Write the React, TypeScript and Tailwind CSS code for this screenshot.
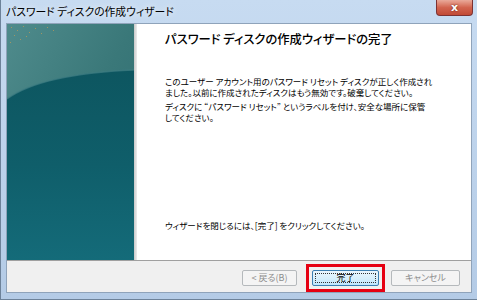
import React from "react";

const jp = "font-['Noto_Sans_CJK_JP','Noto_Sans',sans-serif] [font-feature-settings:'palt']";

const SidePanel = () => (
  <svg width="127" height="236" viewBox="0 0 127 236" className="block">
    <defs>
      <linearGradient id="upper" x1="0" y1="0" x2="1" y2="1">
        <stop offset="0" stopColor="#4f8b8c" />
        <stop offset="0.5" stopColor="#3a7879" />
        <stop offset="1" stopColor="#2c6a70" />
      </linearGradient>
      <linearGradient id="lower" x1="0" y1="0" x2="0" y2="1">
        <stop offset="0" stopColor="#0d5660" />
        <stop offset="0.5" stopColor="#0f5e6a" />
        <stop offset="1" stopColor="#146b79" />
      </linearGradient>
    </defs>
    <rect width="127" height="236" fill="url(#upper)" />
    <path d="M0,75 Q34,50 127,46 L127,236 L0,236 Z" fill="url(#lower)" />
    <path d="M0,75 Q34,50 127,46" fill="none" stroke="#3f7e83" strokeWidth="1.5" opacity="0.7" />
    {[
      [4, 3], [10, 6], [16, 2], [22, 8], [7, 11], [28, 4], [34, 9], [13, 15], [40, 3], [3, 18], [19, 12], [46, 6],
    ].map(([x, y], i) => (
      <rect key={i} x={x} y={y} width="1" height="1" fill="#b59a5a" opacity="0.8" />
    ))}
  </svg>
);

const Button = ({ label, disabled, primary }: { label: string; disabled?: boolean; primary?: boolean }) => {
  if (disabled) {
    return (
      <div className="h-[16px] flex items-center justify-center rounded-[2px] border border-[#b5b9bc] bg-[#f4f4f4] text-[#8d8d8d] text-[9px] leading-none w-full">
        {label}
      </div>
    );
  }
  return (
    <div
      className={`h-[16px] flex items-center justify-center rounded-[2px] border ${
        primary ? "border-[#3c7fb1]" : "border-[#707070]"
      } bg-gradient-to-b from-[#eaf6fd] via-[#d9f0fc] to-[#bee6fd] text-black text-[9px] leading-none w-full p-[2px]`}
    >
      <div className="w-full h-full flex items-center justify-center border border-dotted border-[#333]">
        {label}
      </div>
    </div>
  );
};

export default function App() {
  return (
    <div
      className={`w-[477px] h-[300px] flex flex-col overflow-hidden bg-gradient-to-b from-[#c7dbf1] to-[#b4cbe6] border-l border-b border-[#6d8299] ${jp}`}
    >
      {/* title bar */}
      <div className="h-[23px] flex items-start justify-between pl-[5px] pr-[4px] shrink-0">
        <div className="pt-[4px] text-[10.8px] leading-[14px] text-black [text-shadow:0_0_6px_#ffffff]">
          パスワード ディスクの作成ウィザード
        </div>
        <div className="w-[37px] h-[16px] rounded-b-[4px] border border-t-0 border-[#7d3232] bg-gradient-to-b from-[#e9a99a] via-[#d2644f] to-[#c14a36] flex items-center justify-center">
          <span className="text-white text-[11px] font-bold leading-none font-['DejaVu_Sans',sans-serif] [text-shadow:0_0_2px_#5a1a10]">
            x
          </span>
        </div>
      </div>

      {/* client */}
      <div className="flex-1 mx-[5px] mb-[6px] flex flex-col border border-[#8fa3ba] bg-white">
        <div className="flex h-[236px] shrink-0">
          <SidePanel />
          <div className="w-[3px] bg-gradient-to-r from-[#c9c9c9] to-[#ececec]" />
          <div className="flex-1 flex flex-col pl-[28px] pt-[7px] pb-[29px] text-black">
            <div className="text-[12.3px] font-medium leading-[16px] whitespace-nowrap">
              パスワード ディスクの作成ウィザードの完了
            </div>
            <div className="mt-[29px] text-[8.5px] leading-[11px] whitespace-nowrap">
              このユーザー アカウント用のパスワード リセット ディスクが正しく作成され
              <br />
              ました。以前に作成されたディスクはもう無効です。破棄してください。
            </div>
            <div className="mt-[3px] text-[8.5px] leading-[11px] whitespace-nowrap">
              ディスクに “パスワード リセット” というラベルを付け、安全な場所に保管
              <br />
              してください。
            </div>
            <div className="flex-1" />
            <div className="text-[8.5px] leading-[11px] whitespace-nowrap">
              ウィザードを閉じるには、[完了] をクリックしてください。
            </div>
          </div>
        </div>
        <div className="flex-1 border-t border-[#a0a0a0] bg-[#f0f0f0] flex items-center justify-end pr-[11px] pt-[2px]">
          <div className="w-[55px]">
            <Button label="< 戻る(B)" disabled />
          </div>
          <div className="ml-[9px] border-[3px] border-[#e60012] p-[3px] w-[79px]">
            <Button label="完了" primary />
          </div>
          <div className="ml-[6px] w-[69px]">
            <Button label="キャンセル" disabled />
          </div>
        </div>
      </div>
    </div>
  );
}
